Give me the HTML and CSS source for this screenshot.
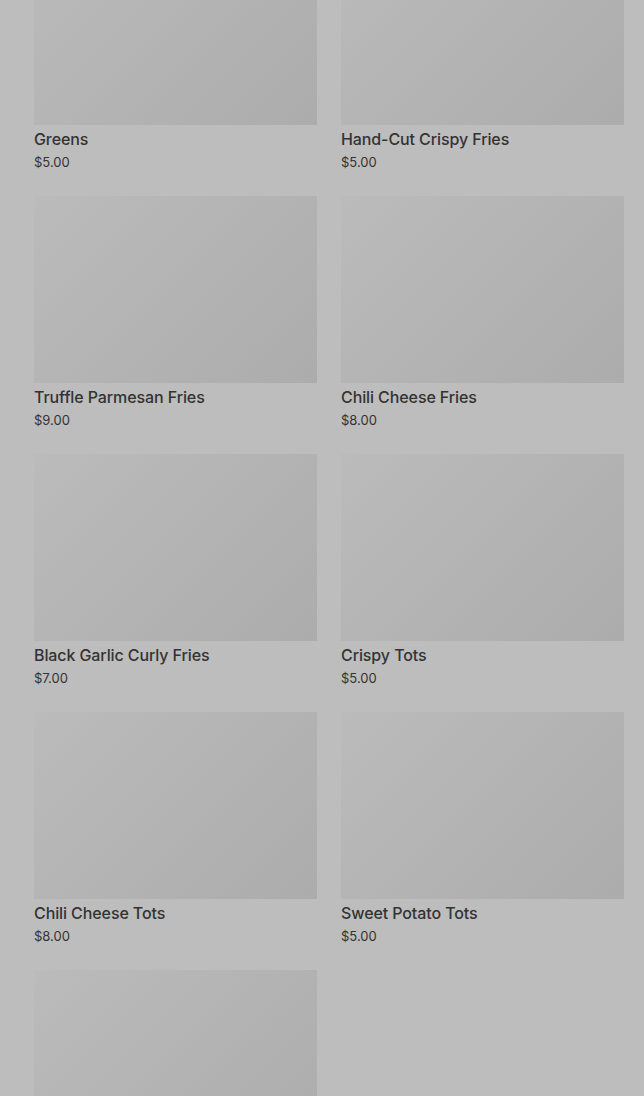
FILE: index.html
```html
<!DOCTYPE html>
<html lang="en">
<head>
    <meta charset="UTF-8">
    <meta name="viewport" content="width=device-width, initial-scale=1.0">
    <title>Menu</title>
    <link rel="stylesheet" href="styles.css">
</head>
<body>

    <div class="menu-grid">
        <div class="item">
            <div class="item-photo"></div>
            <div class="item-name">Greens</div>
            <div class="item-price">$5.00</div>
        </div>
        <div class="item">
            <div class="item-photo"></div>
            <div class="item-name">Hand-Cut Crispy Fries</div>
            <div class="item-price">$5.00</div>
        </div>
        <div class="item">
            <div class="item-photo"></div>
            <div class="item-name">Truffle Parmesan Fries</div>
            <div class="item-price">$9.00</div>
        </div>
        <div class="item">
            <div class="item-photo"></div>
            <div class="item-name">Chili Cheese Fries</div>
            <div class="item-price">$8.00</div>
        </div>
        <div class="item">
            <div class="item-photo"></div>
            <div class="item-name">Black Garlic Curly Fries</div>
            <div class="item-price">$7.00</div>
        </div>
        <div class="item">
            <div class="item-photo"></div>
            <div class="item-name">Crispy Tots</div>
            <div class="item-price">$5.00</div>
        </div>
        <div class="item">
            <div class="item-photo"></div>
            <div class="item-name">Chili Cheese Tots</div>
            <div class="item-price">$8.00</div>
        </div>
        <div class="item">
            <div class="item-photo"></div>
            <div class="item-name">Sweet Potato Tots</div>
            <div class="item-price">$5.00</div>
        </div>
        <div class="item">
            <div class="item-photo"></div>
        </div>
    </div>

</body>
</html>
```

FILE: styles.css
```css
body {
    font-family: Inter, 'Noto Sans', sans-serif;
    background: #bdbdbd;
    color: #333;
    margin: 0;
    padding: 0;
    height: 1096px;
    overflow: hidden;
}

.menu-grid {
    display: grid;
    grid-template-columns: 283px 283px;
    column-gap: 24px;
    row-gap: 23px;
    padding: 0 20px 0 34px;
    margin-top: -62px;
}

.item-photo {
    height: 187px;
    background: linear-gradient(135deg, #bbbbbb, #acacac);
}

.item-name {
    margin-top: 3px;
    font-size: 16px;
    font-weight: 500;
    line-height: 22px;
    letter-spacing: -0.1px;
}

.item-price {
    margin-top: 1px;
    font-size: 13px;
    line-height: 22px;
}
```
